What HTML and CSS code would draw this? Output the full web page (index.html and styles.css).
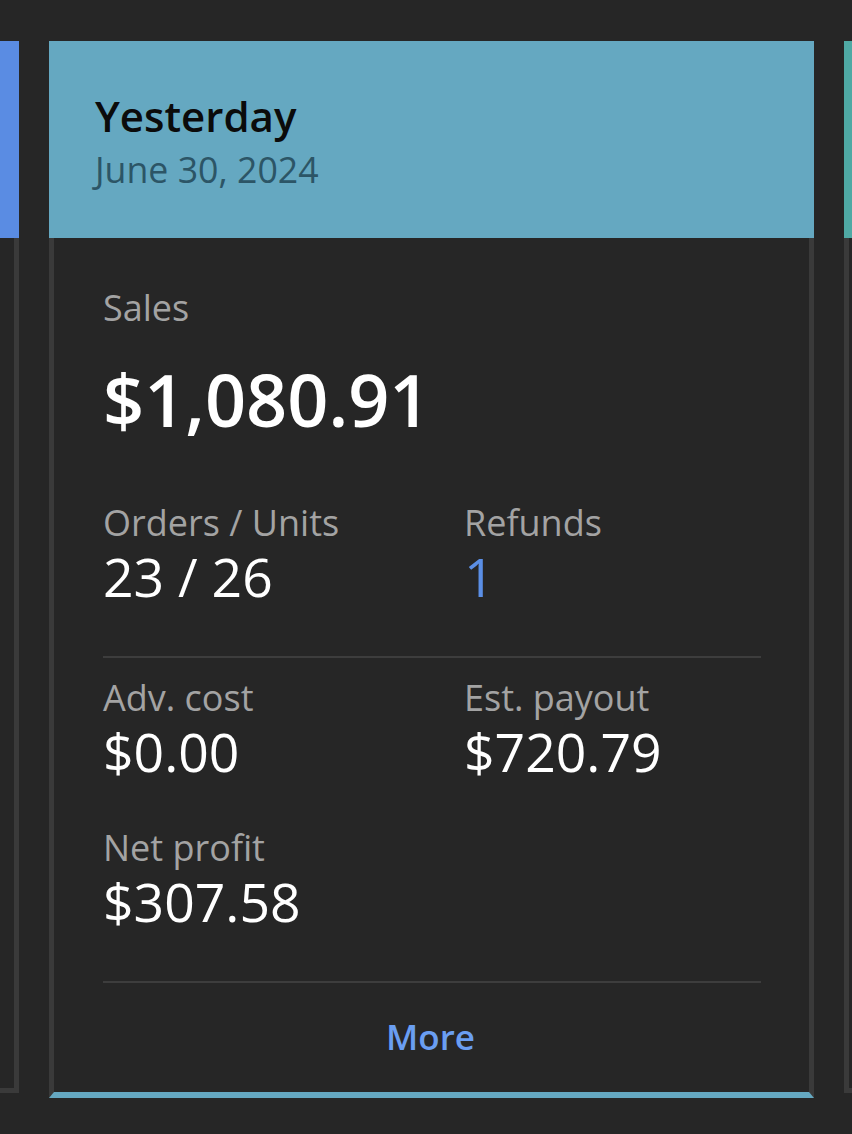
FILE: index.html
```html
<!DOCTYPE html>
<html lang="en">
<head>
<meta charset="utf-8">
<title>Sales summary</title>
<link rel="stylesheet" href="styles.css">
</head>
<body>
<div class="strip">
  <section class="card card-side">
    <div class="card-head head-blue"></div>
    <div class="card-body"></div>
  </section>

  <section class="card card-active">
    <div class="card-head head-cyan">
      <div class="period">Yesterday</div>
      <div class="date">June 30, 2024</div>
    </div>
    <div class="card-body">
      <div class="label">Sales</div>
      <div class="big-value">$1,080.91</div>

      <div class="pair first-pair">
        <div class="metric">
          <div class="label">Orders / Units</div>
          <div class="value">23 / 26</div>
        </div>
        <div class="metric">
          <div class="label">Refunds</div>
          <div class="value value-link">1</div>
        </div>
      </div>

      <div class="divider"></div>

      <div class="pair second-pair">
        <div class="metric">
          <div class="label">Adv. cost</div>
          <div class="value">$0.00</div>
        </div>
        <div class="metric">
          <div class="label">Est. payout</div>
          <div class="value">$720.79</div>
        </div>
        <div class="metric net">
          <div class="label">Net profit</div>
          <div class="value">$307.58</div>
        </div>
      </div>

      <div class="divider bottom-divider"></div>

      <div class="more">More</div>
    </div>
  </section>

  <section class="card card-side">
    <div class="card-head head-teal"></div>
    <div class="card-body"></div>
  </section>
</div>
</body>
</html>
```

FILE: styles.css
```css
html, body {
  margin: 0;
  padding: 0;
  background: #262626;
  font-family: "Open Sans", "Noto Sans", "Liberation Sans", sans-serif;
  overflow: hidden;
}

.strip {
  display: flex;
  align-items: stretch;
  gap: 30px;
  margin-left: -746px;
  padding-top: 41px;
}

.card {
  flex: 0 0 765px;
  width: 765px;
  display: flex;
  flex-direction: column;
  box-sizing: border-box;
}

.card-head {
  height: 197px;
  box-sizing: border-box;
  padding: 49px 46px 0 46px;
}

.head-blue { background: #5a8ce3; }
.head-cyan { background: #65a8c1; }
.head-teal { background: #4fa9a4; }

.card-body {
  flex: 1;
  border-left: 5px solid #3a3a3a;
  border-right: 5px solid #3a3a3a;
  border-bottom: 5px solid #3a3a3a;
  padding: 46px 48px 31px 49px;
}

.card-side .card-body {
  margin-bottom: 5px;
}

.card-active .card-body {
  border-bottom: 6px solid #65a8c1;
}

.period {
  font-size: 42px;
  line-height: 52px;
  font-weight: 600;
  color: #0b0b0b;
}

.date {
  margin-top: 3px;
  font-size: 35.7px;
  line-height: 48px;
  color: #2c5566;
}

.label {
  font-size: 36px;
  line-height: 48px;
  color: #a3a3a3;
}

.big-value {
  margin-top: 27px;
  font-size: 72px;
  line-height: 80px;
  font-weight: 600;
  color: #ffffff;
}

.pair {
  display: grid;
  grid-template-columns: 361px 1fr;
}

.first-pair { margin-top: 60px; }
.second-pair { margin-top: 16px; row-gap: 42px; }

.value {
  font-size: 53.5px;
  line-height: 60px;
  color: #ffffff;
}

.value-link { color: #5b8fe6; }

.divider {
  height: 2px;
  background: #3d3d3d;
  margin-top: 49px;
}

.more {
  margin-top: 30px;
  padding-right: 3px;
  text-align: center;
  font-size: 35px;
  line-height: 48px;
  font-weight: 600;
  color: #6a9ef2;
}
```
